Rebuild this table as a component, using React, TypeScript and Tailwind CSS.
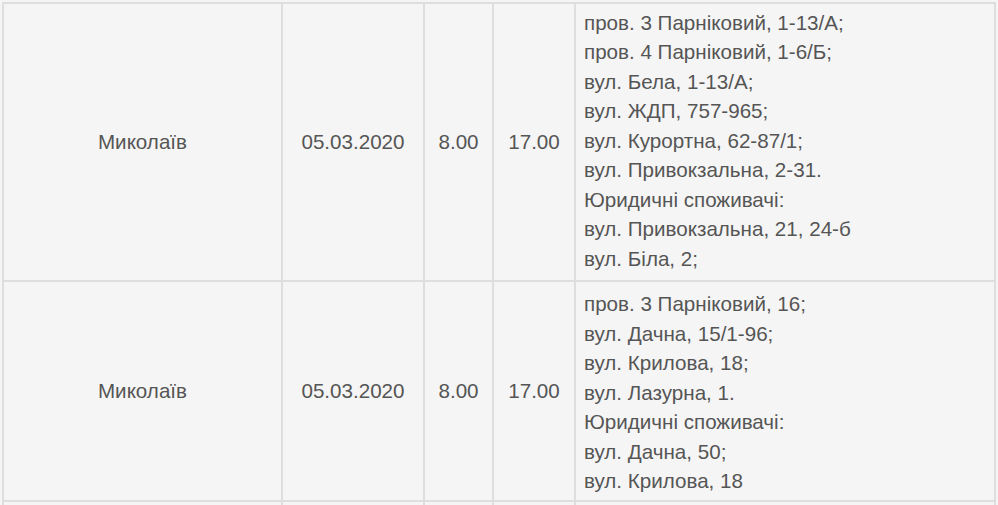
import React from "react";

type Row = { city: string; date: string; from: string; to: string; lines: string[]; h: string; off: string };

const rows: Row[] = [
  {
    city: "Миколаїв",
    date: "05.03.2020",
    from: "8.00",
    to: "17.00",
    h: "h-[278px]",
    off: "-mt-[3px]",
    lines: [
      "пров. 3 Парніковий, 1-13/А;",
      "пров. 4 Парніковий, 1-6/Б;",
      "вул. Бела, 1-13/А;",
      "вул. ЖДП, 757-965;",
      "вул. Курортна, 62-87/1;",
      "вул. Привокзальна, 2-31.",
      "Юридичні споживачі:",
      "вул. Привокзальна, 21, 24-б",
      "вул. Біла, 2;",
    ],
  },
  {
    city: "Миколаїв",
    date: "05.03.2020",
    from: "8.00",
    to: "17.00",
    h: "h-[220px]",
    off: "mt-[3px]",
    lines: [
      "пров. 3 Парніковий, 16;",
      "вул. Дачна, 15/1-96;",
      "вул. Крилова, 18;",
      "вул. Лазурна, 1.",
      "Юридичні споживачі:",
      "вул. Дачна, 50;",
      "вул. Крилова, 18",
    ],
  },
];

export default function App() {
  return (
    <div
      className="h-[505px] w-full bg-[#f5f5f5] pl-[2px] pt-[2px] text-[#555] text-[20.6px] leading-[29.5px] overflow-hidden"
      style={{ fontFamily: '"Liberation Sans", Arial, Helvetica, sans-serif' }}
    >
      <table className="border-collapse table-fixed w-[992px]">
        <colgroup>
          <col className="w-[279px]" />
          <col className="w-[142px]" />
          <col className="w-[69px]" />
          <col className="w-[82px]" />
          <col className="w-[420px]" />
        </colgroup>
        <tbody>
          {rows.map((r, i) => (
            <tr key={i} className={r.h}>
              <td className="border-2 border-[#dedede] text-center align-middle">{r.city}</td>
              <td className="border-2 border-[#dedede] text-center align-middle">{r.date}</td>
              <td className="border-2 border-[#dedede] text-center align-middle">{r.from}</td>
              <td className="border-2 border-[#dedede] text-center align-middle">{r.to}</td>
              <td className="border-2 border-[#dedede] align-middle pl-[8px]">
                <div className={r.off}>
                  {r.lines.map((l, j) => (
                    <div key={j}>{l}</div>
                  ))}
                </div>
              </td>
            </tr>
          ))}
          <tr className="h-[40px]">
            <td className="border-2 border-[#dedede]"></td>
            <td className="border-2 border-[#dedede]"></td>
            <td className="border-2 border-[#dedede]"></td>
            <td className="border-2 border-[#dedede]"></td>
            <td className="border-2 border-[#dedede]"></td>
          </tr>
        </tbody>
      </table>
    </div>
  );
}
